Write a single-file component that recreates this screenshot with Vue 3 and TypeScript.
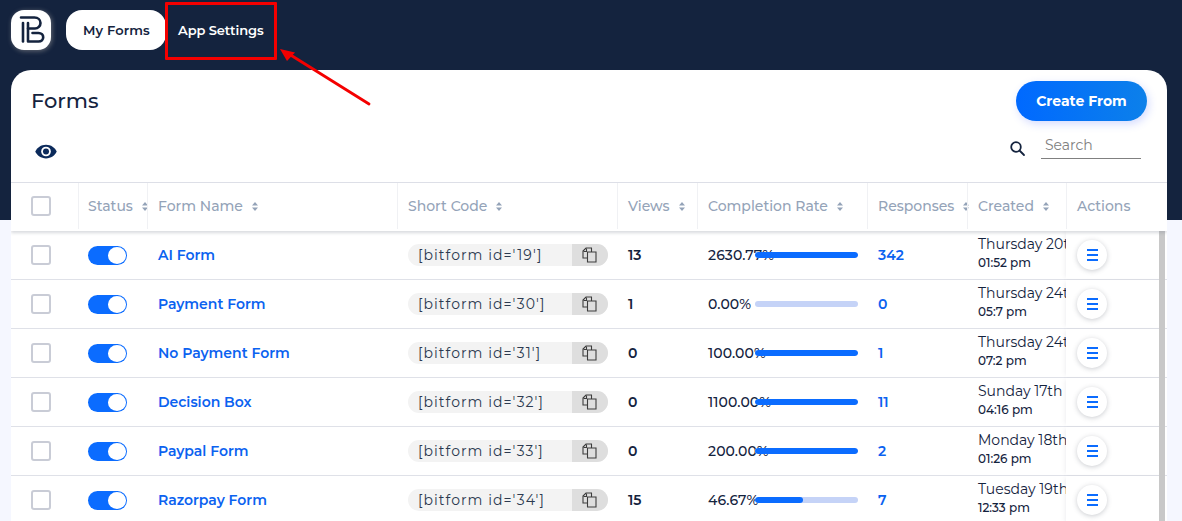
<script setup lang="ts">
interface Row {
  name: string
  id: string
  views: string
  rate: string
  pct: number
  responses: string
  day: string
  time: string
}
const rows: Row[] = [
  { name: 'AI Form', id: '19', views: '13', rate: '2630.77%', pct: 100, responses: '342', day: 'Thursday 20th', time: '01:52 pm' },
  { name: 'Payment Form', id: '30', views: '1', rate: '0.00%', pct: 0, responses: '0', day: 'Thursday 24th', time: '05:7 pm' },
  { name: 'No Payment Form', id: '31', views: '0', rate: '100.00%', pct: 100, responses: '1', day: 'Thursday 24th', time: '07:2 pm' },
  { name: 'Decision Box', id: '32', views: '0', rate: '1100.00%', pct: 100, responses: '11', day: 'Sunday 17th', time: '04:16 pm' },
  { name: 'Paypal Form', id: '33', views: '0', rate: '200.00%', pct: 100, responses: '2', day: 'Monday 18th', time: '01:26 pm' },
  { name: 'Razorpay Form', id: '34', views: '15', rate: '46.67%', pct: 46.67, responses: '7', day: 'Tuesday 19th', time: '12:33 pm' },
]
const heads = [
  { label: 'Status', cls: 'h-status' },
  { label: 'Form Name', cls: 'h-name' },
  { label: 'Short Code', cls: 'h-code' },
  { label: 'Views', cls: 'h-views' },
  { label: 'Completion Rate', cls: 'h-rate' },
  { label: 'Responses', cls: 'h-resp' },
  { label: 'Created', cls: 'h-created' },
]
</script>

<template>
  <div class="page">
    <header class="topbar">
      <div class="logo">
        <svg width="30" height="30" viewBox="0 0 30 30" fill="none" stroke="#14233e" stroke-width="2.600" stroke-linecap="round" stroke-linejoin="round">
          <path d="M5 2.500H18.500C22 2.500 24.500 5 24.500 8C24.500 11 22 13.500 19 13.500H12" />
          <path d="M7 8V26.500" />
          <path d="M12 8V26.500H22.500C25.500 26.500 27.200 24.500 27.200 22.200C27.200 19.900 25.500 18 22.500 18H16.500" />
        </svg>
      </div>
      <nav class="nav">
        <a class="tab active">My Forms</a>
        <a class="tab">App Settings</a>
      </nav>
    </header>

    <main class="card">
      <div class="card-top">
        <h1 class="title">Forms</h1>
        <button class="create">Create From</button>
      </div>
      <div class="tools">
        <svg class="eye" width="22" height="15" viewBox="0 0 24 16">
          <path fill="#0b2a5b" d="M12 .5C6.600.5 2.200 3.600.3 8c1.900 4.400 6.300 7.500 11.700 7.500S21.800 12.400 23.700 8C21.800 3.600 17.400.5 12 .5Z" />
          <circle cx="12" cy="8" r="5.300" fill="#fff" />
          <circle cx="12" cy="8" r="3.300" fill="#0b2a5b" />
        </svg>
        <div class="search">
          <svg width="17" height="17" viewBox="0 0 17 17" fill="none" stroke="#14233e" stroke-width="1.800" stroke-linecap="round">
            <circle cx="7" cy="7" r="4.800" />
            <path d="M10.500 10.500L15 15" />
          </svg>
          <span class="search-input">Search</span>
        </div>
      </div>

      <div class="table">
        <div class="row head">
          <div class="cell c-check"><span class="box"></span></div>
          <div v-for="h in heads" :key="h.label" class="cell hcell" :class="h.cls">
            <span>{{ h.label }}</span>
            <svg class="sort" width="8" height="11" viewBox="0 0 8 11" fill="#94a3b8"><path d="M4 1L7 4.500H1ZM4 10L1 6.500H7Z" /></svg>
          </div>
          <div class="cell hcell h-actions"><span>Actions</span></div>
        </div>

        <div class="body">
          <div v-for="r in rows" :key="r.id" class="row data">
            <div class="cell c-check"><span class="box"></span></div>
            <div class="cell h-status toggle-cell"><span class="toggle"><span class="knob"></span></span></div>
            <div class="cell h-name pad"><a class="link name">{{ r.name }}</a></div>
            <div class="cell h-code pad">
              <div class="code">
                <span class="code-text">[bitform id='{{ r.id }}']</span>
                <span class="copy">
                  <svg width="15" height="16" viewBox="0 0 15 16" fill="none" stroke="#3d3d3d" stroke-width="1.100">
                    <path d="M5.500 11H1V4L4 1H9.500V5" />
                    <path d="M4.500 1.500V4.500H1.500" />
                    <path d="M5.500 5H14V15H5.500Z" />
                  </svg>
                </span>
              </div>
            </div>
            <div class="cell h-views pad strong">{{ r.views }}</div>
            <div class="cell h-rate pad rate">
              <span class="rate-text">{{ r.rate }}</span>
              <span class="bar"><span class="fill" :style="{ width: r.pct + '%' }"></span></span>
            </div>
            <div class="cell h-resp pad"><a class="link resp">{{ r.responses }}</a></div>
            <div class="cell h-created pad created">
              <span class="day">{{ r.day }}</span>
              <span class="time">{{ r.time }}</span>
            </div>
            <div class="cell h-actions action-cell">
              <button class="menu">
                <svg width="11" height="12" viewBox="0 0 11 12" stroke="#0b6cff" stroke-width="2"><path d="M0 1H11M0 6H11M0 11H11" /></svg>
              </button>
            </div>
          </div>
          <div class="scrollbar"></div>
        </div>
      </div>
    </main>

    <div class="redbox"></div>
    <svg class="arrow" width="100" height="70" viewBox="0 0 100 70" fill="none">
      <path d="M90 55L10 5" stroke="#f40000" stroke-width="2.800" stroke-linecap="round" />
      <path d="M1 0L16 3.500L8 12Z" fill="#f40000" />
    </svg>
  </div>
</template>

<style scoped>
.page {
  position: relative;
  height: 521px;
  overflow: hidden;
  background: linear-gradient(#14233e 0, #14233e 220px, #f5f7ff 220px);
  font-family: Montserrat, Inter, "Noto Sans", sans-serif;
  color: #14233e;
}
.topbar {
  height: 70px;
  display: flex;
  align-items: flex-start;
  padding: 10px 0 0 11px;
  box-sizing: border-box;
  gap: 15px;
}
.logo {
  width: 40px;
  height: 40px;
  border-radius: 13px;
  background: #fff;
  display: flex;
  align-items: center;
  justify-content: center;
  box-shadow: 1px 1px 5px rgba(255, 240, 220, .35);
}
.nav { display: flex; }
.tab {
  height: 40px;
  display: flex;
  align-items: center;
  padding: 0 12px;
  font-size: 13px;
  font-weight: 600;
  letter-spacing: -.1px;
  color: #fff;
  border-radius: 16px;
}
.tab.active {
  width: 100px;
  padding-left: 17px;
  box-sizing: border-box;
  background: #fff;
  color: #14233e;
  letter-spacing: .15px;
}
.card {
  margin: 0 15px 0 11px;
  height: 451px;
  background: #fff;
  border-radius: 20px 20px 0 0;
  overflow: hidden;
}
.card-top {
  height: 62px;
  display: flex;
  justify-content: space-between;
  align-items: flex-start;
  padding: 11px 20px 0;
  box-sizing: border-box;
}
.title {
  margin: 7px 0 0;
  font-size: 21px;
  line-height: 26px;
  font-weight: 500;
  color: #14233e;
}
.create {
  width: 131px;
  height: 40px;
  border: 0;
  border-radius: 20px;
  background: linear-gradient(90deg, #0069ff, #0c80ea);
  color: #fff;
  font: inherit;
  font-size: 14px;
  font-weight: 700;
  box-shadow: 2px 3px 8px rgba(60, 90, 255, .22);
}
.tools {
  height: 50px;
  display: flex;
  justify-content: space-between;
  align-items: flex-start;
  padding: 0 26px 0 24px;
}
.eye { margin-top: 12px; }
.search {
  display: flex;
  align-items: center;
  gap: 15px;
}
.search svg { margin-top: 6px; }
.search-input {
  width: 96px;
  height: 25px;
  padding: 1px 0 0 4px;
  line-height: 24px;
  border-bottom: 1px solid #808080;
  font-size: 14px;
  color: #808080;
  box-sizing: content-box;
}
.table { border-top: 1px solid #dfe1e8; }
.row {
  display: grid;
  grid-template-columns: 67px 69px 250px 220px 80px 170px 100px 99px 101px;
}
.head {
  height: 48px;
  padding-bottom: 2px;
  box-sizing: border-box;
  box-shadow: 0 2px 3px rgba(120, 125, 140, .28);
  position: relative;
  z-index: 2;
  background: #fff;
}
.cell { display: flex; align-items: center; min-width: 0; }
.c-check { padding-left: 20px; }
.hcell {
  padding-left: 10px;
  font-size: 14px;
  font-weight: 500;
  color: #94a3b8;
  border-left: 1px solid #f0f1f4;
  white-space: nowrap;
  box-sizing: border-box;
}
.hcell.h-status { padding-left: 9px; }
.sort { margin-left: 8px; flex: none; }
.box {
  width: 16px;
  height: 16px;
  border: 2px solid #c9ccd6;
  border-radius: 3px;
  display: block;
}
.body { position: relative; }
.data {
  height: 49px;
  border-bottom: 1px solid #dfe1e8;
  box-sizing: border-box;
}
.pad { padding-left: 11px; }
.toggle-cell { padding-left: 10px; }
.toggle {
  width: 39px;
  height: 19px;
  border-radius: 10px;
  background: #0b6cff;
  display: flex;
  justify-content: flex-end;
  align-items: center;
  padding-right: 1px;
  box-sizing: border-box;
}
.knob {
  width: 18.500px;
  height: 17px;
  border-radius: 50%;
  background: #fff;
}
.link { color: #0b62f0; font-weight: 600; font-size: 14px; }
.code {
  width: 200px;
  height: 22px;
  border-radius: 11px;
  background: #f3f3f3;
  overflow: hidden;
  display: flex;
  justify-content: space-between;
}
.code-text {
  padding-left: 10px;
  font-size: 14px;
  line-height: 22px;
  color: #2c3a50;
  letter-spacing: 1.050px;
  white-space: nowrap;
}
.copy {
  width: 36px;
  background: #dedede;
  display: flex;
  align-items: center;
  justify-content: center;
  padding-right: 2px;
  box-sizing: border-box;
}
.strong, .rate { font-size: 14px; font-weight: 600; color: #14233e; }
.rate { position: relative; font-weight: 500; }
.rate-text { white-space: nowrap; letter-spacing: .1px; }
.bar {
  position: absolute;
  left: 58px;
  top: 50%;
  margin-top: -3px;
  width: 103px;
  height: 6px;
  border-radius: 3px;
  background: #c5d3f7;
  overflow: hidden;
}
.fill {
  display: block;
  height: 100%;
  border-radius: 3px;
  background: #0b6cff;
}
.created {
  flex-direction: column;
  align-items: flex-start;
  justify-content: center;
  padding-bottom: 5px;
  box-sizing: border-box;
  overflow: hidden;
  white-space: nowrap;
}
.day { font-size: 14px; line-height: 21px; }
.time { font-size: 12px; line-height: 17px; font-weight: 500; margin-top: -1px; }
.action-cell {
  padding-left: 11px;
  background: #fff;
  box-shadow: -3px 0 4px -2px rgba(120, 125, 140, .12);
  position: relative;
  z-index: 1;
}
.menu {
  width: 30px;
  height: 30px;
  padding: 0;
  border: 0;
  border-radius: 50%;
  background: #fff;
  display: flex;
  align-items: center;
  justify-content: center;
  box-shadow: 0 1px 5px rgba(80, 85, 100, .3);
}
.scrollbar {
  position: absolute;
  right: 2px;
  top: 0;
  width: 6px;
  height: 100%;
  background: #c8c8c8;
  z-index: 1;
}
.redbox {
  position: absolute;
  left: 165px;
  top: 2px;
  width: 112px;
  height: 58px;
  box-sizing: border-box;
  border: 3px solid #f40000;
  border-radius: 1px;
}
.arrow {
  position: absolute;
  left: 279px;
  top: 49px;
}
</style>
